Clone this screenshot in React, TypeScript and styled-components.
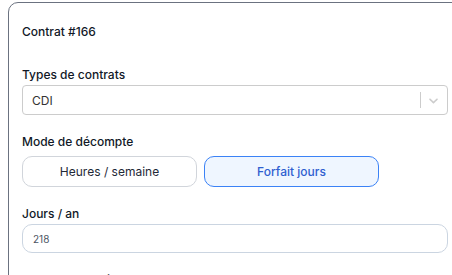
import styled, { createGlobalStyle } from "styled-components";

const GlobalStyle = createGlobalStyle`
  html, body {
    margin: 0;
    padding: 0;
    overflow: hidden;
    background: #ffffff;
    font-family: Inter, "Noto Sans", sans-serif;
  }
`;

type ModeProps = {
  $active?: boolean;
};

function ChevronDown() {
  return (
    <svg width="20" height="20" viewBox="0 0 20 20" fill="#cccccc">
      <path d="M4.516 7.548c0.436-0.446 1.043-0.481 1.576 0l3.908 3.747 3.908-3.747c0.533-0.481 1.141-0.446 1.574 0 0.436 0.445 0.408 1.197 0 1.615-0.406 0.418-4.695 4.502-4.695 4.502-0.217 0.223-0.502 0.335-0.787 0.335s-0.57-0.112-0.789-0.335c0 0-4.287-4.084-4.695-4.502s-0.436-1.17 0-1.615z" />
    </svg>
  );
}

function App() {
  return (
    <>
      <GlobalStyle />
      <Card>
        <Title>Contrat #166</Title>

        <Field>
          <Label>Types de contrats</Label>
          <Select>
            <SelectValue>CDI</SelectValue>
            <Indicators>
              <Separator />
              <IndicatorBox>
                <ChevronDown />
              </IndicatorBox>
            </Indicators>
          </Select>
        </Field>

        <Field>
          <Label>Mode de décompte</Label>
          <ModeGroup>
            <ModeButton>Heures / semaine</ModeButton>
            <ModeButton $active>Forfait jours</ModeButton>
          </ModeGroup>
        </Field>

        <Field>
          <Label>Jours / an</Label>
          <Input defaultValue="218" />
        </Field>

        <Field>
          <Label>Jours de congés</Label>
        </Field>
      </Card>
    </>
  );
}

export default App;

const Card = styled.div`
  box-sizing: border-box;
  width: 454px;
  margin: 2px 0 0 8px;
  padding: 21px 13px 20px 13px;
  border: 1px solid #6b7280;
  border-radius: 10px;
  background: #ffffff;
  display: flex;
  flex-direction: column;
  gap: 19px;
`;

const Title = styled.div`
  font-size: 12px;
  font-weight: 500;
  line-height: 16px;
  color: #111827;
  margin-bottom: 8px;
`;

const Field = styled.div`
  display: flex;
  flex-direction: column;
`;

const Label = styled.div`
  font-size: 12px;
  font-weight: 500;
  line-height: 16px;
  color: #111827;
  margin-bottom: 2px;
`;

const Select = styled.div`
  box-sizing: border-box;
  height: 30px;
  border: 1px solid #cccccc;
  border-radius: 4px;
  display: flex;
  align-items: center;
  justify-content: space-between;
  padding-left: 9px;
`;

const SelectValue = styled.span`
  font-size: 12px;
  color: #333333;
`;

const Indicators = styled.div`
  display: flex;
  align-items: center;
  height: 100%;
`;

const Separator = styled.span`
  width: 1px;
  height: 16px;
  background: #cccccc;
`;

const IndicatorBox = styled.div`
  display: flex;
  align-items: center;
  padding: 0 6px 0 5px;
  svg {
    width: 15px;
    height: 15px;
  }
`;

const ModeGroup = styled.div`
  display: flex;
  gap: 7px;
  margin-top: 4px;
`;

const ModeButton = styled.button<ModeProps>`
  box-sizing: border-box;
  width: 175px;
  height: 31px;
  border-radius: 10px;
  border: 1px solid ${(p) => (p.$active ? "#3b82f6" : "#d1d5db")};
  background: ${(p) => (p.$active ? "#eff6ff" : "#ffffff")};
  color: ${(p) => (p.$active ? "#2f5fd0" : "#1f2937")};
  font-family: Inter, "Noto Sans", sans-serif;
  font-size: 12px;
  font-weight: ${(p) => (p.$active ? 500 : 400)};
  cursor: pointer;
`;

const Input = styled.input`
  box-sizing: border-box;
  height: 29px;
  border: 1px solid #cbd5e1;
  border-radius: 10px;
  padding: 0 10px;
  font-family: Inter, "Noto Sans", sans-serif;
  font-size: 10px;
  color: #4b5563;
  outline: none;
`;
